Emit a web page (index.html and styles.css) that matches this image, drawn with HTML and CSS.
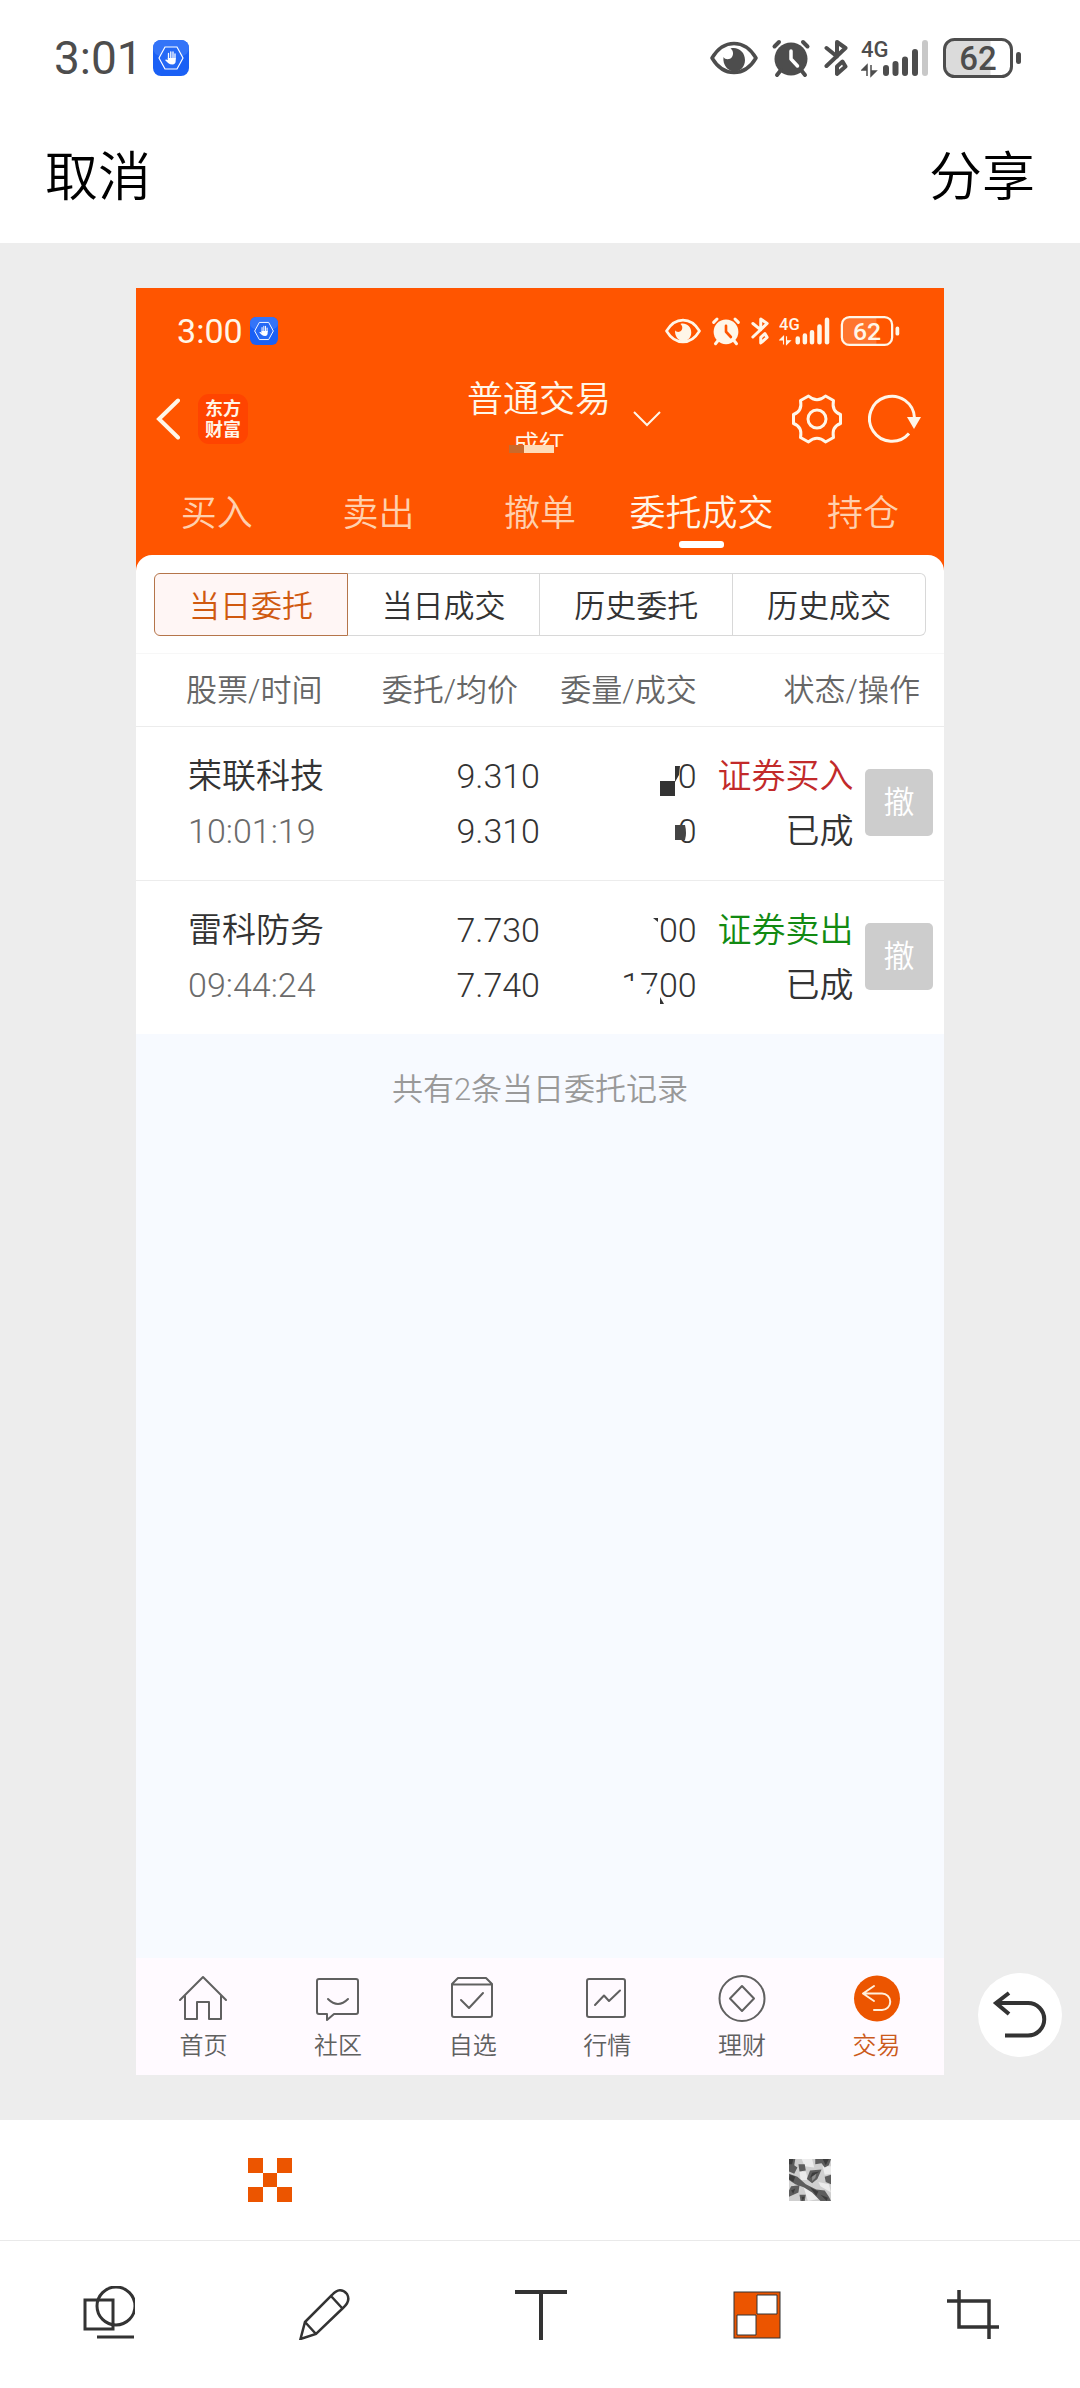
FILE: index.html
```html
<!DOCTYPE html>
<html lang="zh-CN">
<head>
  <meta charset="UTF-8" />
  <meta name="viewport" content="width=device-width, initial-scale=1" />
  <title>编辑截图</title>
  <link rel="stylesheet" href="styles.css">
</head>
<body>
  <!-- shared status bar icons -->
  <svg class="defs" width="0" height="0" aria-hidden="true">
    <symbol id="hand" viewBox="0 0 36 36">
      <rect width="36" height="36" rx="8" fill="#1a60f5"/>
      <rect width="36" height="16" rx="8" fill="#3474f8"/>
      <path d="M6 18 12 7H24L30 18 24 29H12Z" fill="#2569f6" stroke="#fff" stroke-width="1.2"/>
      <path d="M15.500 19V13.500M17.800 18V11.800M20 18V12M22 19V14" fill="none" stroke="#fff" stroke-width="1.3" stroke-linecap="round"/>
      <path d="M14.800 18H22.700V21C22.700 23 21.500 24.500 19.500 24.500 16 24.500 14.500 22.500 12 20 13 18.800 14 19.600 14.800 20.200Z" fill="#fff"/>
    </symbol>
    <symbol id="eye" viewBox="0 0 48 40">
      <path d="M2 20C8 10 15 5.500 24 5.500S40 10 46 20C40 30 33 34.500 24 34.500S8 30 2 20Z" fill="none" stroke="currentColor" stroke-width="3.500" stroke-linejoin="round"/>
      <path d="M13.500 19C15 22 20 22 22 19 24 16 23 12 20.500 10.500 28 8.500 35 14 35 22 35 29 30 33.500 24.500 33.500 18 33.500 12.500 27 13.500 19Z" fill="currentColor"/>
    </symbol>
    <symbol id="alarm" viewBox="0 0 40 40">
      <circle cx="20" cy="21" r="16.500" fill="currentColor"/>
      <path d="M3.500 8.500 8 4M32 4 36.500 8.500M10 32 6 37M30 32 34 37" stroke="currentColor" stroke-width="4" stroke-linecap="round"/>
      <path d="M20 13V21L26.500 28" class="hands" fill="none" stroke-width="3.500" stroke-linecap="round" stroke-linejoin="round"/>
    </symbol>
    <symbol id="bluetooth" viewBox="0 0 24 40">
      <path d="M2.500 10 13 18.500V4L21.500 10 2.500 28M18.500 23.500 21.500 28.500 13 36V28.500Z" fill="none" stroke="currentColor" stroke-width="4" stroke-linecap="round" stroke-linejoin="round"/>
    </symbol>
    <symbol id="bars" viewBox="0 0 68 40">
      <path d="M6 38V27L1 32H6M10 27V38L15 33H10" fill="currentColor" stroke="currentColor" stroke-width="1.500"/>
      <path d="M25 30V35M34.500 26V35M44 21.500V35M54 14V35" stroke="currentColor" stroke-width="6" stroke-linecap="round"/>
      <path d="M64 5V35" class="last-bar" stroke="currentColor" stroke-width="6" stroke-linecap="round"/>
    </symbol>
    <symbol id="battery" viewBox="0 0 80 40">
      <path d="M48.500 1.500H12Q2.500 1.500 2.500 11V29Q2.500 38.500 12 38.500H48.500Z" fill="currentColor" opacity=".2"/>
      <rect x="2.500" y="1.500" width="67" height="37" rx="10" fill="none" stroke="currentColor" stroke-width="3"/>
      <rect x="74" y="14" width="5" height="12" rx="2.500" fill="currentColor"/>
    </symbol>
  </svg>

  <header class="top">
    <div class="status">
      <span class="clock">3:01</span>
      <svg viewBox="0 0 36 36" class="badge"><use href="#hand"/></svg>
      <div class="indicators">
        <svg viewBox="0 0 48 40"><use href="#eye"/></svg>
        <svg viewBox="0 0 40 40"><use href="#alarm"/></svg>
        <svg viewBox="0 0 24 40"><use href="#bluetooth"/></svg>
        <svg viewBox="0 0 68 40"><use href="#bars"/><text x="0" y="19" class="net">4G</text></svg>
        <svg viewBox="0 0 80 40"><use href="#battery"/><text x="36" y="32" class="level">62</text></svg>
      </div>
    </div>
    <div class="actions">
      <button>取消</button>
      <button>分享</button>
    </div>
  </header>

  <main class="stage">
    <section class="phone">
      <div class="status small">
        <span class="clock">3:00</span>
        <svg viewBox="0 0 36 36" class="badge"><use href="#hand"/></svg>
        <div class="indicators">
          <svg viewBox="0 0 48 40"><use href="#eye"/></svg>
          <svg viewBox="0 0 40 40"><use href="#alarm"/></svg>
          <svg viewBox="0 0 24 40"><use href="#bluetooth"/></svg>
          <svg viewBox="0 0 68 40"><use href="#bars"/><text x="0" y="19" class="net">4G</text></svg>
          <svg viewBox="0 0 80 40"><use href="#battery"/><text x="36" y="32" class="level">62</text></svg>
        </div>
      </div>

      <div class="nav">
        <div class="nav-left">
          <button aria-label="返回">
            <svg width="24" height="42" viewBox="0 0 24 42"><path d="M22 2.500 3 21 22 39.500" fill="none" stroke="currentColor" stroke-width="4" stroke-linecap="round"/></svg>
          </button>
          <span class="logo">东方<br>财富</span>
        </div>
        <div class="account">
          <h1>普通交易</h1>
          <div class="name">成红
            <svg class="name-mask" viewBox="0 0 60 16">
              <rect y="2" width="60" height="14" fill="#ff5500"/>
              <rect y="0" width="15" height="8" fill="#c96a2c"/>
              <rect x="15" y="0" width="30" height="8" fill="#ffdcb8"/>
            </svg>
          </div>
        </div>
        <div class="nav-right">
          <button aria-label="切换账户">
            <svg width="28" height="16" viewBox="0 0 28 16"><path d="M1 1 14 14 27 1" fill="none" stroke="currentColor" stroke-width="2"/></svg>
          </button>
          <button aria-label="设置" class="gear">
            <svg width="50" height="50" viewBox="0 0 50 50" fill="none" stroke="currentColor" stroke-width="3" stroke-linejoin="round">
              <path d="M16.500 2Q25 9.500 33.500 2L41.500 6.500Q39.400 17.200 48.500 20.500V29.500Q39.400 32.800 41.500 43.500L33.500 48Q25 40.500 16.500 48L8.500 43.500Q10.600 32.800 1.500 29.500V20.500Q10.600 17.200 8.500 6.500Z"/>
              <circle cx="25" cy="25" r="9"/>
            </svg>
          </button>
          <button aria-label="刷新">
            <svg width="54" height="50" viewBox="0 0 54 50">
              <path d="M46.500 24A22.500 22.500 0 1 0 41 39.500" fill="none" stroke="currentColor" stroke-width="3"/>
              <path d="M39 23H53L46 35Z" fill="currentColor"/>
            </svg>
          </button>
        </div>
      </div>

      <nav class="tabs">
        <a href="#">买入</a>
        <a href="#">卖出</a>
        <a href="#">撤单</a>
        <a href="#" class="active">委托成交</a>
        <a href="#">持仓</a>
      </nav>

      <div class="sheet">
        <div class="segments">
          <button class="active">当日委托</button>
          <button>当日成交</button>
          <button>历史委托</button>
          <button>历史成交</button>
        </div>
        <table class="orders">
          <colgroup>
            <col class="c-stock"><col class="c-price"><col class="c-qty"><col class="c-state"><col>
          </colgroup>
          <thead>
            <tr>
              <th class="stock">股票/时间</th>
              <th class="price">委托/均价</th>
              <th>委量/成交</th>
              <th class="state" colspan="2">状态/操作</th>
            </tr>
          </thead>
          <tbody>
            <tr>
              <td class="stock">荣联科技<br><span class="time">10:01:19</span></td>
              <td>9.310<br>9.310</td>
              <td class="qty">0<br>0
                <svg class="mask" viewBox="0 0 100 110">
                  <path d="M63 32H78V47H63ZM78 17H83L82 26 78 33Z" fill="#333"/>
                  <path d="M78 76H88Q90 84 88 91H78Z" fill="#444"/>
                </svg>
              </td>
              <td><span class="buy">证券买入</span><br>已成</td>
              <td class="op"><button disabled>撤</button></td>
            </tr>
            <tr>
              <td class="stock">雷科防务<br><span class="time">09:44:24</span></td>
              <td>7.730<br>7.740</td>
              <td class="qty">00<br>1700
                <svg class="mask" viewBox="0 0 100 110">
                  <path d="M56 15H61V19Z" fill="#333"/>
                  <path d="M24 78H40V98H24ZM42 80 56 84 48 90 54 92 61 84V98H42Z" fill="#fff"/>
                  <path d="M63 94V101H67Z" fill="#333"/>
                </svg>
              </td>
              <td><span class="sell">证券卖出</span><br>已成</td>
              <td class="op"><button disabled>撤</button></td>
            </tr>
          </tbody>
        </table>
      </div>

      <div class="rest">共有2条当日委托记录</div>

      <nav class="tabbar">
        <a href="#">
          <svg viewBox="0 0 48 48"><path d="M1 26 24 3 47 26M6 22V45H18V28H30V45H42V22"/></svg>
          首页
        </a>
        <a href="#">
          <svg viewBox="0 0 48 48"><path d="M5 5H42Q44 5 44 7V38Q44 40 42 40H20L13 46V40H5Q3 40 3 38V7Q3 5 5 5ZM14 25Q24 35 34 25"/></svg>
          社区
        </a>
        <a href="#">
          <svg viewBox="0 0 48 48"><path d="M3 10 9 4H37L43 10V41Q43 43 41 43H5Q3 43 3 41ZM3 10.500H43M12 26 20 34 34 19"/></svg>
          自选
        </a>
        <a href="#">
          <svg viewBox="0 0 48 48"><rect x="4" y="5" width="38" height="38" rx="2"/><path d="M12 31 21 21.500 26 27 37 16.500"/></svg>
          行情
        </a>
        <a href="#">
          <svg viewBox="0 0 48 48"><circle cx="24" cy="24.500" r="22.500"/><path d="M24 12 36 24.500 24 37 12 24.500Z"/></svg>
          理财
        </a>
        <a href="#" class="active">
          <svg viewBox="0 0 48 48"><circle class="disc" cx="24" cy="24.500" r="23"/><path d="M21 12 10 19.500 21 27M10 19.500H29A8 8 0 0 1 29 36H21"/></svg>
          交易
        </a>
      </nav>
    </section>

    <button class="undo" aria-label="撤销">
      <svg viewBox="0 0 84 84"><path d="M31 20 18 30 31 41M18 30H50A16 16 0 0 1 50 62.500H27"/></svg>
    </button>
  </main>

  <footer>
    <div class="styles">
      <button aria-label="方格马赛克">
        <svg width="44" height="44" viewBox="0 0 44 44"><path d="M0 0H15V15H0ZM29 0H44V15H29ZM15 15H29V29H15ZM0 29H15V44H0ZM29 29H44V44H29Z" fill="#ec5500"/></svg>
      </button>
      <button aria-label="模糊马赛克">
        <svg width="42" height="42" viewBox="0 0 40 40">
          <rect width="40" height="40" fill="#cfcfcf"/>
          <path d="M12 0H22L24 8 15 7ZM32 7H40V14L34 15ZM10 12 16 12 18 20 11 20ZM28 22 38 24 40 32 30 26ZM14 27 22 30 28 38 18 40Z" fill="#ececec"/>
          <path d="M0 0H6L5 6 8 8 5 14 0 12ZM25 0H40L38 6 34 8 31 4 25 5ZM0 14 8 17 16 24 26 29 34 30 38 36 40 40H30L22 32 14 27 6 24 0 20ZM20 11 31 10 27 19 22 23 17 19ZM34 17 40 15V24L35 22ZM2 26 10 25 9 32 0 36V30ZM10 34H16L15 40H11ZM9 5H15L16 11 10 12Z" fill="#5d5d5d"/>
          <path d="M0 0H4L3 5H0ZM32 0H38L35 6ZM1 15 6 17 4 22 0 19ZM22 13 29 12 20 18ZM20 27 28 31 26 35ZM30 34 37 37 36 40ZM2 30 6 28 4 33ZM12 36H15L13 40Z" fill="#3c3c3c"/>
          <path d="M22 17 26 14 25 18 22 21Z" fill="#909090"/>
        </svg>
      </button>
    </div>
    <div class="tools">
      <button aria-label="图形"><svg viewBox="0 0 54 54" stroke-width="3"><rect x="4" y="14" width="28" height="29"/><circle cx="35" cy="20" r="19"/><path d="M16 51H53"/></svg></button>
      <button aria-label="画笔"><svg viewBox="0 0 54 54" stroke-width="2.500"><path d="M3.500 53 8 36 35 9Q43 0 50 8 54 15 46 22L19 48ZM8 36 19 48M34 10 45 22"/></svg></button>
      <button aria-label="文字"><svg viewBox="0 0 54 54" stroke-width="4"><path d="M2 6H54M28 6V54"/></svg></button>
      <button aria-label="马赛克"><svg viewBox="0 0 54 54" stroke="none"><rect x="5" y="6" width="46" height="46" fill="#ec5500"/><path d="M28 9H48V28H28ZM8 29H27V49H8Z" fill="#fff"/></svg></button>
      <button aria-label="裁剪"><svg viewBox="0 0 54 54" stroke-width="3.500"><path d="M2 15H44V53M14 4V41H54"/></svg></button>
    </div>
  </footer>
</body>
</html>
```

FILE: styles.css
```css
* {
  box-sizing: border-box;
}
body {
  margin: 0;
  min-height: 100vh;
  display: flex;
  flex-direction: column;
  background: #fff;
  color: #333;
  font-family: Roboto, "Noto Sans CJK SC", sans-serif;
  font-weight: 350;
}
button {
  margin: 0;
  padding: 0;
  border: none;
  background: none;
  color: inherit;
  font: inherit;
  cursor: pointer;
}
a {
  color: inherit;
  text-decoration: none;
}
svg {
  display: block;
}
.defs {
  position: absolute;
}

/* Status bars */
.status {
  --screen: #fff;
  --empty-bar: 0.3;
  display: flex;
  align-items: center;
  height: 116px;
  padding: 0 58px 0 54px;
  color: #4d4d4d;
}
.clock {
  font-size: 46px;
  font-weight: 400;
}
.badge {
  width: 36px;
  height: 36px;
  margin-left: 10px;
}
.indicators {
  display: flex;
  gap: 13px;
  margin-left: auto;
}
.indicators svg {
  width: auto;
  height: 40px;
}
.indicators text {
  fill: currentColor;
}
.hands {
  stroke: var(--screen);
}
.last-bar {
  opacity: var(--empty-bar);
}
.net {
  font-size: 22px;
  font-weight: 500;
}
.level {
  font-size: 33px;
  font-weight: 500;
  text-anchor: middle;
}
.status.small {
  --screen: #ff5500;
  --empty-bar: 1;
  height: 86px;
  padding: 0 44px 0 41px;
  color: #fff6e8;
}
.small .clock {
  font-size: 34px;
}
.small .badge {
  width: 28px;
  height: 28px;
  margin-left: 7px;
}
.small .indicators {
  gap: 10px;
}
.small .indicators svg {
  height: 30px;
}

/* Editor header */
.actions {
  display: flex;
  justify-content: space-between;
  height: 127px;
  padding: 0 45px 13px;
  color: #000;
  font-size: 53px;
}

/* Screenshot preview */
.stage {
  flex: 1;
  display: flex;
  justify-content: center;
  position: relative;
  padding: 45px 0;
  background: #ededed;
}
.phone {
  width: 74.8%;
  display: flex;
  flex-direction: column;
  background: #ff5500;
}
.nav {
  display: grid;
  grid-template-columns: 1fr auto 1fr;
  align-items: center;
  height: 90px;
  padding: 0 22px 0 20px;
  color: #fff6e8;
}
.nav-left {
  display: flex;
  align-items: center;
  gap: 18px;
}
.logo {
  width: 50px;
  padding: 4px 7px 4px 7px;
  border-radius: 11px;
  background: #ff4400;
  font-size: 18px;
  font-weight: 700;
  line-height: 21px;
}
.account {
  text-align: center;
}
.account h1 {
  margin: 0 0 6px;
  font-size: 36px;
  font-weight: 350;
  line-height: 46px;
}
.name {
  position: relative;
  font-size: 26px;
  line-height: 32px;
}
.name-mask {
  position: absolute;
  left: 42px;
  bottom: 0;
  width: 60px;
  height: 16px;
}
.nav-right {
  display: flex;
  align-items: center;
  gap: 26px;
  padding-left: 22px;
}
.gear {
  margin-left: auto;
}
.tabs {
  display: flex;
  height: 91px;
  padding-top: 26px;
  color: #ffd0ae;
  font-size: 36px;
  line-height: 48px;
}
.tabs a {
  flex: 1;
  text-align: center;
}
.tabs .active {
  color: #fff6e8;
}
.tabs .active::after {
  content: "";
  display: block;
  width: 45px;
  height: 7px;
  margin: 3px auto 0;
  border-radius: 3px;
  background: #fff;
}

/* Orders */
.sheet {
  border-radius: 16px 16px 0 0;
  background: #fff;
}
.segments {
  display: flex;
  padding: 18px 18px 17px;
}
.segments button {
  flex: 1;
  height: 63px;
  padding-bottom: 3px;
  border: 1px solid #d8d8d8;
  border-left: none;
  font-size: 31px;
}
.segments button:first-child {
  border-left: 1px solid #d8d8d8;
  border-radius: 6px 0 0 6px;
}
.segments button:last-child {
  border-radius: 0 6px 6px 0;
}
.segments .active {
  border-color: #b5754a !important;
  background: #fff6f5;
  color: #d0590f;
}
.orders {
  width: 100%;
  table-layout: fixed;
  border-collapse: collapse;
  text-align: right;
}
.c-stock,
.c-price {
  width: 25%;
}
.c-qty,
.c-state {
  width: 19.4%;
}
.orders th {
  height: 73px;
  padding: 0 0 5px;
  border-top: 1px solid #f7f7f7;
  color: #666;
  font-size: 31px;
  font-weight: 350;
  text-align: right;
  white-space: nowrap;
}
.orders .stock {
  padding-left: 52px;
  text-align: left;
}
.orders th.stock {
  padding-left: 50px;
}
.orders .price {
  padding-right: 22px;
}
.orders .state {
  padding-right: 24px;
}
.orders td {
  padding: 22px 0 21px;
  border-top: 1px solid #ececec;
  font-size: 34px;
  line-height: 55px;
  white-space: nowrap;
}
.time {
  color: #6b6b6b;
}
.buy {
  color: #c22a2a;
}
.sell {
  color: #128a12;
}
.qty {
  position: relative;
}
.mask {
  position: absolute;
  right: 0;
  top: 22px;
  width: 100px;
  height: 110px;
}
.orders .op {
  padding: 19px 11px 21px 0;
}
.op button {
  width: 68px;
  height: 67px;
  border-radius: 5px;
  background: #cdcdcd;
  color: #fff;
  font-size: 31px;
  line-height: 67px;
}
.rest {
  flex: 1;
  padding-top: 33px;
  background: #f7faff;
  color: #999;
  font-size: 31px;
  line-height: 46px;
  text-align: center;
}
.tabbar {
  display: flex;
  height: 117px;
  padding-top: 16px;
  background: #fffaff;
  color: #606060;
  font-size: 24px;
  line-height: 36px;
  text-align: center;
}
.tabbar a {
  flex: 1;
}
.tabbar svg {
  width: 48px;
  height: 48px;
  margin: 0 auto 6px;
  fill: none;
  stroke: currentColor;
  stroke-width: 2;
  stroke-linejoin: round;
  stroke-linecap: round;
}
.tabbar .active {
  color: #cb5a1c;
}
.tabbar .active svg {
  stroke: #fff0dc;
}
.tabbar .disc {
  fill: #ec5500;
  stroke: none;
}
.undo {
  position: absolute;
  right: 18px;
  bottom: 63px;
  width: 84px;
  height: 84px;
  border-radius: 50%;
  background: #fff;
}
.undo svg {
  fill: none;
  stroke: #333;
  stroke-width: 4;
}

/* Editor toolbar */
.styles,
.tools {
  display: flex;
}
.styles {
  height: 121px;
  border-bottom: 1px solid #e9e9e9;
}
.tools {
  height: 147px;
  padding-bottom: 4px;
}
footer button {
  flex: 1;
  display: flex;
  justify-content: center;
  align-items: center;
}
.tools svg {
  width: 54px;
  height: 54px;
  fill: none;
  stroke: #333;
}
```
